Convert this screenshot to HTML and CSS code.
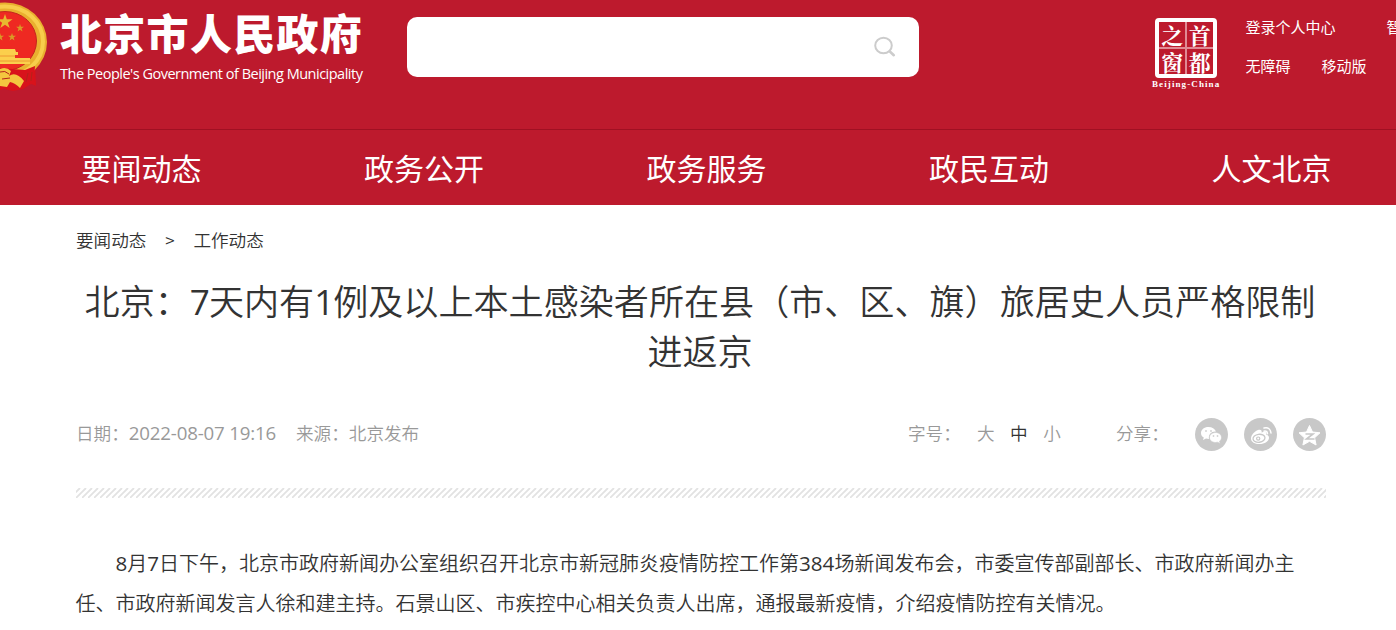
FILE: index.html
```html
<!DOCTYPE html>
<html lang="zh-CN">
<head>
  <meta charset="UTF-8">
  <title>北京市人民政府</title>
  <link rel="stylesheet" href="styles.css">
</head>
<body>
  <header>
    <div class="top">
      <svg class="emblem" width="48" height="94" viewBox="0 0 48 94">
        <path d="M-20 66L35 66L36 85L31 84L23 89L13 91L-6 87Z" fill="#d8131b"/>
        <ellipse cx="5" cy="42" rx="42" ry="39.500" fill="#e9b02f"/>
        <ellipse cx="5" cy="41.500" rx="38" ry="35" fill="none" stroke="#f7cd4b" stroke-width="4"/>
        <ellipse cx="5" cy="41" rx="31.500" ry="29.500" fill="#ee2922" stroke="#c3271c"/>
        <path d="M5 14l1.800 5.200h5.800l-4.700 3.500 1.800 5.400L5 24.800l-4.700 3.300 1.800-5.400-4.700-3.500h5.800z" fill="#e8b830"/>
        <path d="M20 24l1 2.800h3l-2.400 1.800.9 2.800-2.500-1.700-2.400 1.700.9-2.800-2.400-1.800h3zM12 33l1 2.800h3l-2.400 1.800.9 2.800-2.500-1.700-2.400 1.700.9-2.800L8 35.800h3zM0 33l1 2.800h3l-2.400 1.800.9 2.800L0 38.700z" fill="#d99a26"/>
        <path d="M0 49h15l1 3h2v3h-3v3h15v6H0z" fill="#fbcf4c"/>
        <path d="M0 56h15M0 61h30" stroke="#eb8a2c" stroke-width=".8"/>
        <path d="M25 70l10-4-1 13 2 7-6-3-7 6-3-7-5 8-8-2-7 2v-22z" fill="#d8131b"/>
        <path d="M0 69q6-3 11 2l-2 5q7-5 15 5l-4 7q-5-5-10-6l-3 5-7-1z" fill="#f4c63f"/>
        <path d="M0 72q5-2 9 2M2 79l8-1M28 73l-2 9M32 72l-1 9" stroke="#b5221a" fill="none"/>
      </svg>
      <div class="logo">
        <div class="logo-cn">北京市人民政府</div>
        <div class="logo-en">The People's Government of Beijing Municipality</div>
      </div>
      <div class="search">
        <svg width="22" height="22" viewBox="0 0 22 22" fill="none" stroke="#ccc">
          <ellipse cx="9.500" cy="9.500" rx="8.300" ry="7.700" stroke-width="2"/>
          <path d="M15.800 15.500l4 3.700" stroke-width="2.600" stroke-linecap="round"/>
        </svg>
      </div>
      <div class="window">
        <div class="seal"><span>之</span><span>首</span><span>窗</span><span>都</span></div>
        <div class="seal-en">Beijing-China</div>
      </div>
      <div class="links">
        <div><a href="#">登录个人中心</a><a href="#" class="robot">智能问答</a></div>
        <div><a href="#">无障碍</a><a href="#" class="mobile">移动版</a></div>
      </div>
    </div>
    <nav>
      <a href="#">要闻动态</a>
      <a href="#">政务公开</a>
      <a href="#">政务服务</a>
      <a href="#">政民互动</a>
      <a href="#">人文北京</a>
    </nav>
  </header>

  <div class="container">
    <div class="crumbs"><a href="#">要闻动态</a><span class="arrow">&gt;</span><a href="#">工作动态</a></div>
    <h1>北京：<span class="num">7</span>天内有<span class="num">1</span>例及以上本土感染者所在县（市、区、旗）旅居史人员严格限制进返京</h1>
    <div class="meta">
      <span class="date">日期：<span class="time">2022-08-07 19:16</span></span>
      <span class="source">来源：北京发布</span>
      <div class="size"><span class="size-label">字号：</span><a href="#">大</a><a href="#" class="on">中</a><a href="#">小</a></div>
      <span class="share-label">分享：</span>
      <div class="share">
        <svg width="33" height="33" viewBox="0 0 33 33">
          <circle cx="16.500" cy="16.500" r="16.500" fill="#c8c8c8"/>
          <path d="M13.500 9C9 9 6 11.700 6 15c0 2 1 3.500 2.800 4.600L8 22l3-1.500 3 .5c-1-5 3-8 7-7.500C20 10.800 17 9 13.500 9z" fill="#fff"/>
          <path d="M20.500 14.500c-3.500 0-6 2.200-6 5s2.500 5 6 5l2-.3 2.700 1.300-.7-2.300c1.500-1 2-2.300 2-3.700 0-2.800-2.500-5-6-5z" fill="#fff" stroke="#c8c8c8" stroke-width=".6"/>
          <g fill="#d4d4d4"><circle cx="11" cy="13" r="1"/><circle cx="16" cy="13" r="1"/><circle cx="18.500" cy="18" r=".9"/><circle cx="22.500" cy="18" r=".9"/></g>
        </svg>
        <svg width="33" height="33" viewBox="0 0 33 33">
          <circle cx="16.500" cy="16.500" r="16.500" fill="#c8c8c8"/>
          <path d="M14 12c-3 1-7 5-7 8.500 0 3.700 4 5.500 8.500 5.500 5 0 9.500-3 9.500-6.300 0-1.700-1.300-2.700-2.700-3 .8-2.500-.8-4-4.800-2.200.7-2-.5-3.500-3.500-2.500z" fill="#fff"/>
          <ellipse cx="15" cy="20.300" rx="6" ry="4" fill="none" stroke="#c8c8c8" stroke-width="1.300" transform="rotate(-8 15 20.300)"/>
          <circle cx="14.200" cy="20.600" r="1.600" fill="#fff" stroke="#c8c8c8" stroke-width="1.200"/>
          <path d="M20 10q6-1.500 7 5M20 13.200q3-.7 3.500 2.500" fill="none" stroke="#fff" stroke-width="1.500" stroke-linecap="round"/>
        </svg>
        <svg width="33" height="33" viewBox="0 0 33 33">
          <circle cx="16.500" cy="16.500" r="16.500" fill="#c8c8c8"/>
          <path d="M16.500 7.500l3 6.500 7.500.8-5.400 5 1.500 7.200-6.600-3.700L9.900 27l1.500-7.200-5.400-5 7.500-.8z" fill="#fff" stroke="#fff" stroke-linejoin="round"/>
          <path d="M12.500 16h7.500l-6.500 5h8" fill="none" stroke="#c8c8c8" stroke-width="1.600"/>
        </svg>
      </div>
    </div>
    <svg class="stripe" width="1250" height="10">
      <defs>
        <pattern id="hatch" width="6" height="10" patternUnits="userSpaceOnUse">
          <path d="M-6 10L4 0M0 10L10 0M-12 10L-2 0" stroke="#e2e2e2" stroke-width="1.800"/>
        </pattern>
      </defs>
      <rect width="1250" height="10" fill="url(#hatch)"/>
    </svg>
    <p><span class="num">8</span>月<span class="num">7</span>日下午，北京市政府新闻办公室组织召开北京市新冠肺炎疫情防控工作第<span class="num">384</span>场新闻发布会，市委宣传部副部长、市政府新闻办主任、市政府新闻发言人徐和建主持。石景山区、市疾控中心相关负责人出席，通报最新疫情，介绍疫情防控有关情况。</p>
  </div>
</body>
</html>
```
FILE: styles.css
```css
body {
  margin: 0;
  font-family: "Noto Sans CJK SC", sans-serif;
  font-weight: 350;
  background-color: #fff;
  color: #333;
  overflow: hidden;
}
a {
  color: inherit;
  text-decoration: none;
}
header {
  background-color: #bd1a2d;
  color: white;
  height: 205px;
}
.top {
  height: 129px;
  display: flex;
  align-items: flex-start;
  overflow: hidden;
  border-bottom: 1px solid #a01022;
}
.emblem {
  flex: none;
}
.logo {
  width: 347px;
  flex: none;
  margin-left: 12px;
  white-space: nowrap;
}
.logo-cn {
  height: 61px;
  font-size: 42px;
  line-height: 64px;
  font-weight: 900;
  letter-spacing: 1.3px;
}
.logo-en {
  font-family: "Open Sans", sans-serif;
  font-size: 14.5px;
  line-height: 26px;
  font-weight: 400;
  letter-spacing: -0.5px;
}
.search {
  width: 512px;
  height: 60px;
  flex: none;
  margin-top: 17px;
  box-sizing: border-box;
  background-color: white;
  border-radius: 10px;
  display: flex;
  align-items: center;
  justify-content: flex-end;
  padding-right: 23px;
}
.window {
  width: 70px;
  flex: none;
  margin: 18px 0 0 232px;
}
.seal {
  width: 62px;
  height: 60px;
  margin-left: 4px;
  box-sizing: border-box;
  border: 4px solid white;
  border-radius: 4px;
  display: grid;
  grid-template-columns: 1fr 1fr;
  grid-template-rows: 1fr 1fr;
  gap: 1px;
  background: linear-gradient(#e08a94, #e08a94) center / 2px 100% no-repeat, linear-gradient(#e08a94, #e08a94) center / 100% 2px no-repeat;
}
.seal span {
  font-family: "Noto Serif CJK SC", "Noto Sans CJK SC", sans-serif;
  font-weight: 700;
  font-size: 22px;
  line-height: 25px;
  text-align: center;
}
.seal-en {
  font-family: "Liberation Serif", serif;
  font-weight: bold;
  font-size: 9px;
  line-height: 13px;
  letter-spacing: 1.1px;
  text-indent: 1px;
  white-space: nowrap;
}
.links {
  margin: 7px 0 0 24.5px;
  font-size: 15px;
  line-height: 39px;
  font-weight: 400;
  white-space: nowrap;
}
.robot {
  margin-left: 51px;
}
.mobile {
  margin-left: 31px;
}
nav {
  width: 1250px;
  margin-left: 81.5px;
  display: flex;
  justify-content: space-between;
  font-size: 30px;
  line-height: 74px;
  font-weight: 400;
}
.container {
  width: 1250px;
  margin-left: 76px;
}
.crumbs {
  height: 70px;
  font-size: 17.6px;
  line-height: 69px;
}
.arrow {
  display: inline-block;
  width: 47px;
  text-align: center;
  font-size: 17px;
}
h1 {
  margin: 0 1px 0 -1px;
  font-size: 35.1px;
  line-height: 50px;
  font-weight: 350;
  text-align: center;
}
.num {
  font-family: "Open Sans", sans-serif;
  line-height: 1;
  font-weight: 400;
}
h1 .num {
  letter-spacing: -1px;
}
.time {
  font-family: "Open Sans", sans-serif;
  font-size: 18.7px;
  line-height: 1;
  font-weight: 400;
  letter-spacing: -0.18px;
}
.meta {
  height: 33px;
  margin-top: 43px;
  display: flex;
  font-size: 17.6px;
  line-height: 29px;
  color: #999;
  white-space: nowrap;
}
.date {
  width: 220px;
}
.source {
  width: 612px;
}
.size {
  width: 208px;
}
.size-label {
  display: inline-block;
  width: 69px;
}
.size a {
  margin-right: 15.5px;
}
.size .on {
  color: #333;
}
.share-label {
  width: 79px;
}
.share {
  display: flex;
  gap: 16px;
}
.stripe {
  display: block;
  margin-top: 37px;
}
p {
  margin: 45px 0 0 -0.5px;
  font-size: 20px;
  line-height: 40px;
  text-indent: 40px;
}
p .num {
  font-size: 20.6px;
}
```
